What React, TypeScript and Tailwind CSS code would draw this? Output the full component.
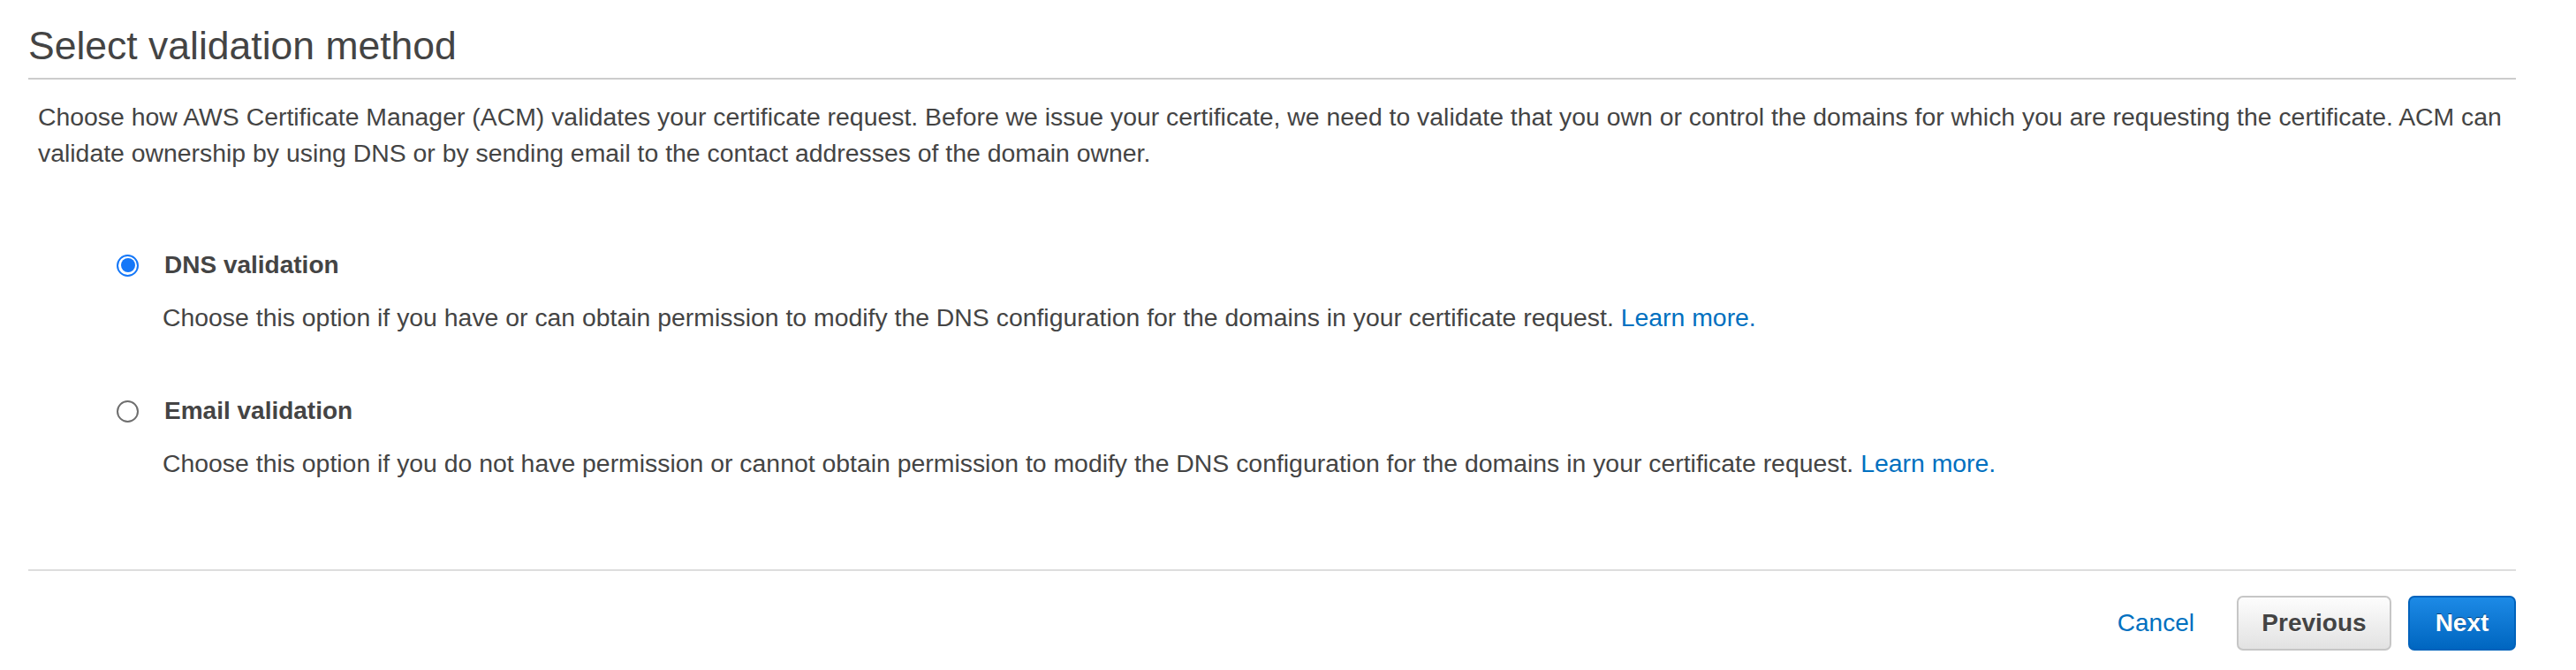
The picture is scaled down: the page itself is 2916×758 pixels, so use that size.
import { useState } from 'react';

type Method = 'dns' | 'email';

const options: { id: Method; label: string; text: string }[] = [
  {
    id: 'dns',
    label: 'DNS validation',
    text: 'Choose this option if you have or can obtain permission to modify the DNS configuration for the domains in your certificate request.',
  },
  {
    id: 'email',
    label: 'Email validation',
    text: 'Choose this option if you do not have permission or cannot obtain permission to modify the DNS configuration for the domains in your certificate request.',
  },
];

function Radio({ checked }: { checked: boolean }) {
  if (checked) {
    return (
      <span className="flex h-[25px] w-[25px] shrink-0 items-center justify-center rounded-full border-2 border-[#1477f8] bg-white">
        <span className="h-[16px] w-[16px] rounded-full bg-[#1477f8]" />
      </span>
    );
  }
  return <span className="h-[25px] w-[25px] shrink-0 rounded-full border-2 border-[#6e6e6e] bg-white" />;
}

export default function App() {
  const [method, setMethod] = useState<Method>('dns');

  return (
    <div className="h-[758px] w-full bg-white pl-[32px] pr-[68px] text-[#444] [font-family:'Liberation_Sans',Arial,sans-serif]">
      <h2 className="border-b-2 border-[#cccccc] pt-[26px] pb-[10px] text-[44.5px] leading-[52px] font-normal text-[#444]">
        Select validation method
      </h2>

      <p className="mt-[22px] px-[11px] text-[28.4px] leading-[41px]">
        Choose how AWS Certificate Manager (ACM) validates your certificate request. Before we issue your certificate, we
        need to validate that you own or control the domains for which you are requesting the certificate. ACM can
        validate ownership by using DNS or by sending email to the contact addresses of the domain owner.
      </p>

      <div className="mt-[86px] flex flex-col gap-[66px] pl-[100px]">
        {options.map(opt => (
          <div key={opt.id} className="flex flex-col gap-[19px]">
            <label className="flex cursor-pointer items-center gap-[29px]" onClick={() => setMethod(opt.id)}>
              <Radio checked={method === opt.id} />
              <span className="text-[28px] leading-[40px] font-bold text-[#444]">{opt.label}</span>
            </label>
            <p className="pl-[52px] text-[28.4px] leading-[40px]">
              {opt.text}{' '}
              <a href="#" className="text-[#0070c0]">
                Learn more.
              </a>
            </p>
          </div>
        ))}
      </div>

      <div className="mt-[100px] border-t-2 border-[#dddddd] pt-[28px]">
        <div className="flex items-center justify-end">
          <a href="#" className="mr-[48px] text-[28px] leading-[40px] text-[#0070c0]">
            Cancel
          </a>
          <button className="mr-[19px] h-[62px] w-[175px] rounded-[7px] border-2 border-[#c6c6c6] bg-gradient-to-b from-[#fdfdfd] to-[#e2e2e2] text-[28px] font-bold text-[#444] [text-shadow:0_1px_0_#fff]">
            Previous
          </button>
          <button className="h-[62px] w-[122px] rounded-[7px] border-2 border-[#0062bb] bg-gradient-to-b from-[#1c8ae6] to-[#0066c0] text-[28px] font-bold text-white [text-shadow:0_-1px_0_#00407a]">
            Next
          </button>
        </div>
      </div>
    </div>
  );
}
